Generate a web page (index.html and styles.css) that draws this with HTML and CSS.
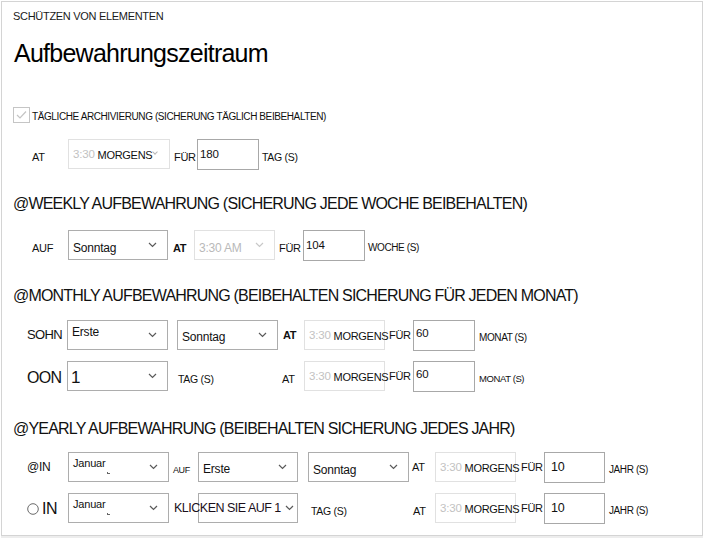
FILE: index.html
```html
<!DOCTYPE html>
<html lang="de">
<head>
<meta charset="utf-8">
<title>Aufbewahrungszeitraum</title>
<link rel="stylesheet" href="styles.css">
</head>
<body>
<div class="panel">
  <div class="head">SCHÜTZEN VON ELEMENTEN</div>
  <h1 class="title">Aufbewahrungszeitraum</h1>

  <div class="checkrow">
    <svg class="cb" width="17" height="16" viewBox="0 0 17 16">
      <rect x="0.5" y="0.5" width="16" height="15" fill="#fff" stroke="#8a8a8a" stroke-dasharray="1 1"/>
      <polyline points="4,8 7,11 13,4.5" fill="none" stroke="#c4c4c4" stroke-width="1.2"/>
    </svg>
    <span class="cblabel">TÄGLICHE ARCHIVIERUNG (SICHERUNG TÄGLICH BEIBEHALTEN)</span>
  </div>

  <div class="row r-daily">
    <span class="lbl w36">AT</span>
    <div class="box dis w102"><span class="t">3:30</span><span class="m">MORGENS</span><span class="tick"></span></div>
    <span class="lbl w27 pl4">FÜR</span>
    <div class="box num w62 np">180</div>
    <span class="lbl sm pl3">TAG (S)</span>
  </div>

  <h2 class="sec s-week">@WEEKLY AUFBEWAHRUNG (SICHERUNG JEDE WOCHE BEIBEHALTEN)</h2>

  <div class="row r-week">
    <span class="lbl w36 low">AUF</span>
    <div class="box sel w100"><span class="v low2">Sonntag</span><svg class="chev" width="9" height="6" viewBox="0 0 9 6"><polyline points="1,1 4.5,4.5 8,1" fill="none" stroke="#5a5a5a" stroke-width="1.2"/></svg></div>
    <span class="lbl b w26 pl5 low">AT</span>
    <div class="box sel dis w81"><span class="v dtxt low2">3:30 AM</span><svg class="chev" width="9" height="6" viewBox="0 0 9 6"><polyline points="1,1 4.5,4.5 8,1" fill="none" stroke="#c8c8c8" stroke-width="1.2"/></svg></div>
    <span class="lbl w28 pl4 low">FÜR</span>
    <div class="box num w62 np low3">104</div>
    <span class="lbl xs pl3 low">WOCHE (S)</span>
  </div>

  <h2 class="sec s-month">@MONTHLY AUFBEWAHRUNG (BEIBEHALTEN SICHERUNG FÜR JEDEN MONAT)</h2>

  <div class="row r-m1">
    <span class="lbl big13 w40 hi">SOHN</span>
    <div class="box sel w101"><span class="v top">Erste</span><svg class="chev" width="9" height="6" viewBox="0 0 9 6"><polyline points="1,1 4.5,4.5 8,1" fill="none" stroke="#5a5a5a" stroke-width="1.2"/></svg></div>
    <div class="box sel w101 ml9"><span class="v low1">Sonntag</span><svg class="chev" width="9" height="6" viewBox="0 0 9 6"><polyline points="1,1 4.5,4.5 8,1" fill="none" stroke="#5a5a5a" stroke-width="1.2"/></svg></div>
    <span class="lbl b w26 pl5">AT</span>
    <div class="box dis w81"><span class="t">3:30</span><span class="m">MORGENS</span></div>
    <span class="lbl w28 pl4">FÜR</span>
    <div class="box num w62 np">60</div>
    <span class="lbl xs pl4 low">MONAT (S)</span>
  </div>

  <div class="row r-m2">
    <span class="lbl big16 w40 dn2">OON</span>
    <div class="box sel w101 np"><span class="v one">1</span><svg class="chev" width="9" height="6" viewBox="0 0 9 6"><polyline points="1,1 4.5,4.5 8,1" fill="none" stroke="#5a5a5a" stroke-width="1.2"/></svg></div>
    <span class="lbl sm w114 pl10 low">TAG (S)</span>
    <span class="lbl w22 low">AT</span>
    <div class="box dis w81"><span class="t">3:30</span><span class="m">MORGENS</span></div>
    <span class="lbl w28 pl4">FÜR</span>
    <div class="box num w62 np">60</div>
    <span class="lbl xxs pl4 low">MONAT (S)</span>
  </div>

  <h2 class="sec s-year">@YEARLY AUFBEWAHRUNG (BEIBEHALTEN SICHERUNG JEDES JAHR)</h2>

  <div class="row r-y1">
    <span class="lbl big12 w41">@IN</span>
    <div class="box sel w101"><span class="v top jan">Januar<span class="mark"></span></span><svg class="chev" width="9" height="6" viewBox="0 0 9 6"><polyline points="1,1 4.5,4.5 8,1" fill="none" stroke="#5a5a5a" stroke-width="1.2"/></svg></div>
    <span class="lbl tiny w29 pl4">AUF</span>
    <div class="box sel w100"><span class="v low1">Erste</span><svg class="chev" width="9" height="6" viewBox="0 0 9 6"><polyline points="1,1 4.5,4.5 8,1" fill="none" stroke="#5a5a5a" stroke-width="1.2"/></svg></div>
    <div class="box sel w101 ml10"><span class="v low2">Sonntag</span><svg class="chev" width="9" height="6" viewBox="0 0 9 6"><polyline points="1,1 4.5,4.5 8,1" fill="none" stroke="#5a5a5a" stroke-width="1.2"/></svg></div>
    <span class="lbl w26 pl3">AT</span>
    <div class="box dis w81"><span class="t">3:30</span><span class="m">MORGENS</span></div>
    <span class="lbl w28 pl5">FÜR</span>
    <div class="box num w61 num10">10</div>
    <span class="lbl xs pl4 low">JAHR (S)</span>
  </div>

  <div class="row r-y2">
    <span class="lbl big15 w41 radio"><svg class="rd" width="12" height="12" viewBox="0 0 12 12"><circle cx="6" cy="6" r="5.3" fill="#fff" stroke="#6a6a6a" stroke-width="1"/></svg>IN</span>
    <div class="box sel w101"><span class="v top jan">Januar<span class="mark"></span></span><svg class="chev" width="9" height="6" viewBox="0 0 9 6"><polyline points="1,1 4.5,4.5 8,1" fill="none" stroke="#5a5a5a" stroke-width="1.2"/></svg></div>
    <span class="spacer w29"></span>
    <div class="box sel w100"><span class="v klick">KLICKEN SIE AUF 1</span><svg class="chev" width="9" height="6" viewBox="0 0 9 6"><polyline points="1,1 4.5,4.5 8,1" fill="none" stroke="#5a5a5a" stroke-width="1.2"/></svg></div>
    <span class="lbl sm w112 pl13 low">TAG (S)</span>
    <span class="lbl w25 pl3 low">AT</span>
    <div class="box dis w81"><span class="t">3:30</span><span class="m">MORGENS</span></div>
    <span class="lbl w28 pl5">FÜR</span>
    <div class="box num w61 num10">10</div>
    <span class="lbl xs pl4 low">JAHR (S)</span>
  </div>
</div>
<div class="foot"></div>
</body>
</html>
```

FILE: styles.css
```css
html, body {
  margin: 0;
  padding: 0;
  background: #ffffff;
}
body {
  font-family: "Liberation Sans", Arial, sans-serif;
  color: #111;
  letter-spacing: -0.2px;
}
.panel {
  margin: 1px 0 0 1px;
  width: 700px;
  height: 533px;
  border: 1px solid #d4d4d4;
  background: #fff;
  overflow: hidden;
}
.foot {
  height: 2px;
  margin-left: 1px;
  width: 702px;
  background: #ededed;
}
.head {
  font-size: 11px;
  line-height: 14px;
  padding: 7px 0 0 11px;
  letter-spacing: -0.3px;
  color: #1a1a1a;
}
.title {
  margin: 15px 0 0 12px;
  font-size: 25px;
  line-height: 30px;
  font-weight: normal;
  letter-spacing: -0.75px;
  color: #000;
}
.checkrow {
  margin-top: 39px;
  padding-left: 11px;
  height: 16px;
  display: flex;
  align-items: center;
}
.cb { flex: none; }
.cblabel {
  font-size: 10px;
  letter-spacing: -0.4px;
  margin-left: 2px;
  padding-top: 3px;
  color: #111;
}
.sec {
  margin: 0;
  padding-left: 11px;
  font-size: 16px;
  line-height: 20px;
  font-weight: normal;
  letter-spacing: -0.8px;
  color: #111;
}
.s-week { margin-top: 25px; }
.s-month { margin-top: 26px; }
.s-year { margin-top: 28px; }

.row {
  display: flex;
  align-items: center;
  height: 30px;
}
.r-daily { margin-top: 16px; padding-left: 30px; }
.r-week { margin-top: 16px; padding-left: 30px; }
.r-m1 { margin-top: 14px; padding-left: 25px; }
.r-m2 { margin-top: 11px; padding-left: 25px; }
.r-y1 { margin-top: 13px; padding-left: 25px; }
.r-y2 { margin-top: 11px; padding-left: 25px; }

.lbl {
  flex: none;
  font-size: 11px;
  letter-spacing: -0.3px;
  white-space: nowrap;
  box-sizing: border-box;
  color: #111;
}
.r-daily .lbl { padding-top: 5px; }
.lbl.b { font-weight: bold; }
.lbl.sm { font-size: 10.5px; }
.lbl.xs { font-size: 10px; letter-spacing: -0.4px; }
.lbl.xxs { font-size: 9.5px; letter-spacing: -0.4px; }
.lbl.tiny { font-size: 9px; letter-spacing: -0.4px; padding-top: 5px; }
.lbl.big12 { font-size: 12px; }
.lbl.big13 { font-size: 13px; letter-spacing: -0.6px; }
.lbl.big15 { font-size: 16px; letter-spacing: -0.5px; }
.lbl.big16 { font-size: 16px; letter-spacing: -0.7px; }
.lbl.low { padding-top: 5px; }
.lbl.hi { padding-bottom: 2px; }
.lbl.dn2 { padding-top: 3px; }
.radio {
  display: flex;
  align-items: center;
  gap: 3px;
  padding-top: 2px;
}
.rd { flex: none; }
.spacer { flex: none; }

.box {
  flex: none;
  box-sizing: border-box;
  height: 30px;
  border: 1px solid #adadad;
  display: flex;
  align-items: center;
  padding: 0 4px;
  font-size: 12px;
  background: #fff;
  position: relative;
  white-space: nowrap;
}
.box.sel {
  justify-content: space-between;
  padding-right: 10px;
}
.box.dis {
  border-color: #e1e1e1;
}
.box.dis .t {
  color: #c2c2c2;
  font-size: 11.5px;
  margin-right: 3px;
}
.box.dis .m {
  font-size: 11px;
  color: #111;
  letter-spacing: -0.3px;
  padding-top: 1px;
}
.tick {
  flex: none;
  width: 3px;
  height: 3px;
  margin: 0 0 4px 1px;
  border-right: 1px solid #b8b8b8;
  border-bottom: 1px solid #b8b8b8;
  transform: rotate(45deg);
}
.dtxt { color: #b9b9b9; }
.box.num {
  align-items: flex-start;
  padding-top: 6px;
  font-size: 11.5px;
  height: 31px;
  border-color: #a8a8a8;
}
.r-daily .box.num { padding-top: 8px; }
.box.np { padding-left: 2px; }
.box.num10 { padding-left: 6px; font-size: 12.5px; padding-top: 7px; }
.box.low3 { padding-top: 8px; }
.v { font-size: 12px; }
.v.top { align-self: flex-start; padding-top: 4px; }
.v.low1 { padding-top: 3px; }
.v.low2 { padding-top: 5px; }
.v.one { font-size: 17px; padding-top: 3px; margin-left: 1px; }
.v.jan { font-size: 11px; position: relative; }
.mark {
  position: absolute;
  left: 34px;
  top: 19px;
  width: 2px;
  height: 1px;
  border-left: 1px solid #666;
  border-bottom: 1px solid #666;
}
.v.klick {
  margin-left: -29px;
  font-size: 12.5px;
  letter-spacing: -0.5px;
  color: #1a0f1a;
}
.chev { flex: none; margin-left: 4px; }

.w22 { width: 22px; }
.w25 { width: 25px; }
.w26 { width: 26px; }
.w27 { width: 27px; }
.w28 { width: 28px; }
.w29 { width: 29px; }
.w36 { width: 36px; }
.w40 { width: 40px; }
.w41 { width: 41px; }
.w61 { width: 61px; }
.w62 { width: 62px; }
.w81 { width: 81px; }
.w100 { width: 100px; }
.w101 { width: 101px; }
.w102 { width: 102px; }
.w112 { width: 112px; }
.w114 { width: 114px; }
.pl3 { padding-left: 3px; }
.pl4 { padding-left: 4px; }
.pl5 { padding-left: 5px; }
.pl10 { padding-left: 10px; }
.pl13 { padding-left: 13px; }
.ml9 { margin-left: 9px; }
.ml10 { margin-left: 10px; }
```
